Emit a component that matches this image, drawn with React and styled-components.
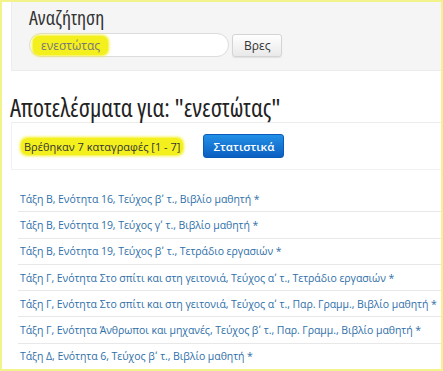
import React from "react";
import styled, { createGlobalStyle } from "styled-components";

const GlobalStyle = createGlobalStyle`
  html, body {
    margin: 0;
    padding: 0;
    background: #fff;
  }
  * {
    box-sizing: border-box;
  }
`;

const Frame = styled.div`
  width: 443px;
  height: 371px;
  border: 2px solid #f3f38c;
  overflow: hidden;
  font-family: "Open Sans", "DejaVu Sans", sans-serif;
  background: #fff;
`;

const SearchPanel = styled.div`
  margin-left: 9px;
  height: 69px;
  padding: 4px 0 0 17px;
  background: #f5f5f5;
  border-left: 1px solid #ececec;
  border-bottom: 1px solid #ececec;
`;

const PanelTitle = styled.h2`
  margin: 0;
  font-size: 20px;
  font-stretch: 75%;
  font-weight: 400;
  line-height: 24px;
  color: #333;
`;

const SearchRow = styled.div`
  display: flex;
  align-items: center;
  gap: 3px;
  margin-top: 3px;
`;

const SearchBox = styled.div`
  width: 200px;
  height: 24px;
  border: 1px solid #dcdcdc;
  border-radius: 12px;
  background: #fff;
  display: flex;
  align-items: center;
  padding-left: 3px;
  font-size: 12px;
  color: #777;
`;

const Marker = styled.span`
  background: #f4f01e;
  border-radius: 6px;
  padding: ${(p) => p.$pad || "1px 8px"};
  box-shadow: 0 0 3px 1px #f4f01e;
`;

const PlainButton = styled.button`
  height: 23px;
  padding: 0 11px;
  font-family: inherit;
  font-size: 12px;
  color: #333;
  border: 1px solid #d4d4d4;
  border-radius: 3px;
  background: linear-gradient(#ffffff, #e9e9e9);
  box-shadow: 0 1px 1px rgba(0, 0, 0, 0.08);
`;

const ResultsTitle = styled.h1`
  margin: 21px 0 0 8px;
  font-size: 25px;
  font-stretch: 75%;
  font-weight: 400;
  line-height: 30px;
  color: #222;
  white-space: nowrap;
`;

const CountBox = styled.div`
  margin-left: 9px;
  height: 48px;
  display: flex;
  align-items: center;
  gap: 20px;
  padding-left: 9px;
  border-top: 1px solid #ececec;
  border-left: 1px solid #f2f2f2;
  border-bottom: 1px solid #f2f2f2;
`;

const CountText = styled.span`
  font-size: 11px;
  color: #333;
`;

const BlueButton = styled.button`
  height: 24px;
  padding: 0 9px;
  font-family: inherit;
  font-size: 11.5px;
  font-weight: 600;
  color: #fff;
  border: 1px solid #0a5cb8;
  border-radius: 3px;
  background: linear-gradient(#2290e6, #0b5fc2);
`;

const ResultList = styled.ul`
  list-style: none;
  margin: 16px 0 0 0;
  padding: 0 0 0 16px;
`;

const ResultItem = styled.li`
  height: 26.3px;
  display: flex;
  align-items: center;
  padding-left: 2px;
  border-bottom: 1px solid #e8e8e8;
  font-size: 10.5px;
  letter-spacing: -0.06px;
  white-space: nowrap;
`;

const ResultLink = styled.a`
  color: #2f6fa9;
  text-decoration: none;
`;

const results = [
  "Τάξη Β, Ενότητα 16, Τεύχος βʹ τ., Βιβλίο μαθητή *",
  "Τάξη Β, Ενότητα 19, Τεύχος γʹ τ., Βιβλίο μαθητή *",
  "Τάξη Β, Ενότητα 19, Τεύχος βʹ τ., Τετράδιο εργασιών *",
  "Τάξη Γ, Ενότητα Στο σπίτι και στη γειτονιά, Τεύχος αʹ τ., Τετράδιο εργασιών *",
  "Τάξη Γ, Ενότητα Στο σπίτι και στη γειτονιά, Τεύχος αʹ τ., Παρ. Γραμμ., Βιβλίο μαθητή *",
  "Τάξη Γ, Ενότητα Άνθρωποι και μηχανές, Τεύχος βʹ τ., Παρ. Γραμμ., Βιβλίο μαθητή *",
  "Τάξη Δ, Ενότητα 6, Τεύχος βʹ τ., Βιβλίο μαθητή *",
];

export default function App() {
  return (
    <Frame>
      <GlobalStyle />
      <SearchPanel>
        <PanelTitle>Αναζήτηση</PanelTitle>
        <SearchRow>
          <SearchBox>
            <Marker>ενεστώτας</Marker>
          </SearchBox>
          <PlainButton>Βρες</PlainButton>
        </SearchRow>
      </SearchPanel>
      <ResultsTitle>Αποτελέσματα για: "ενεστώτας"</ResultsTitle>
      <CountBox>
        <CountText>
          <Marker $pad="1px 3px">Βρέθηκαν 7 καταγραφές [1 - 7]</Marker>
        </CountText>
        <BlueButton>Στατιστικά</BlueButton>
      </CountBox>
      <ResultList>
        {results.map((r) => (
          <ResultItem key={r}>
            <ResultLink href="#">{r}</ResultLink>
          </ResultItem>
        ))}
      </ResultList>
    </Frame>
  );
}
